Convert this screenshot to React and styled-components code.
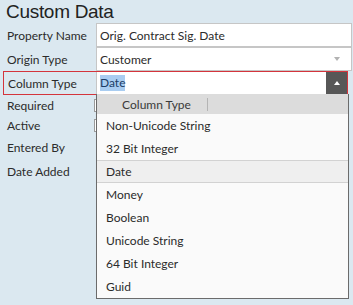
import React from "react";
import styled, { createGlobalStyle } from "styled-components";

const GlobalStyle = createGlobalStyle`
    html, body {
        margin: 0;
        padding: 0;
        background: #dbe8f0;
    }
    * { box-sizing: border-box; }
`;

// 전체 화면
const Page = styled.div`
    width: 353px;
    height: 305px;
    overflow: hidden;
    padding: 0 1px 0 3px;
    font-family: Lato, "Liberation Sans", sans-serif;
    font-size: 12px;
    color: #2b2b2b;
`;

const Title = styled.h1`
    margin: 0;
    height: 23px;
    padding: 1px 0 0 3px;
    font-family: "Liberation Sans", Arial, sans-serif;
    font-weight: normal;
    font-size: 19px;
    letter-spacing: -0.3px;
    line-height: 22px;
    color: #222;
`;

// 라벨 + 입력 한 줄
const Row = styled.div`
    position: relative;
    display: grid;
    grid-template-columns: 93px 1fr;
    align-items: center;
    height: ${(p) => p.$h || 24}px;
`;

const FocusRow = styled(Row)`
    width: 345px;
    border: 1px solid #d4343c;
    grid-template-columns: 92px 1fr;
`;

const Label = styled.span`
    padding-left: 4px;
    white-space: nowrap;
`;

const Field = styled.div`
    display: flex;
    align-items: center;
    height: 24px;
    padding: 0 3px;
    background: #fff;
    border: 1px solid #c6c6c6;
    white-space: nowrap;
    overflow: hidden;
`;

const FocusField = styled.div`
    display: flex;
    align-items: center;
    height: 22px;
    padding-left: 3px;
    background: #fff;
    border-left: 1px solid #c6c6c6;
`;

const Selected = styled.span`
    background: #a9cdf1;
    color: #1c3d66;
    line-height: 16px;
`;

const Caret = styled.span`
    margin-left: auto;
    margin-right: 8px;
    width: 0;
    height: 0;
    border-left: 3px solid transparent;
    border-right: 3px solid transparent;
    border-top: 4px solid #b2b2b2;
`;

const DropButton = styled.div`
    margin-left: auto;
    width: 21px;
    height: 22px;
    background: #575757;
    display: flex;
    align-items: center;
    justify-content: center;

    &::after {
        content: "";
        width: 0;
        height: 0;
        border-left: 3.5px solid transparent;
        border-right: 3.5px solid transparent;
        border-bottom: 4px solid #fff;
    }
`;

const Checkbox = styled.span`
    display: block;
    width: 13px;
    height: 13px;
    margin-left: -2px;
    background: #fff;
    border: 1px solid #9a9a9a;
`;

// 드롭다운 목록
const Popup = styled.div`
    position: absolute;
    top: 100%;
    left: 92px;
    width: 253px;
    background: #fafafa;
    border: 1px solid #6b6b6b;
    border-top: none;
    z-index: 2;
`;

const PopupHeader = styled.div`
    height: 20px;
    background: #dcdcdc;
    display: flex;
    align-items: center;
`;

const HeaderCell = styled.div`
    width: 111px;
    padding-left: 9px;
    text-align: center;
    border-right: 1px solid #b4b4b4;
    line-height: 13px;
    color: #3a3a3a;
`;

const Item = styled.div`
    height: 23px;
    display: flex;
    align-items: center;
    padding-left: 9px;
    color: #2b2b2b;
    ${(p) =>
        p.$active &&
        `
        background: #efefef;
        border-top: 1px solid #d2d2d2;
        border-bottom: 1px solid #d2d2d2;
    `}
`;

const types = [
    "Non-Unicode String",
    "32 Bit Integer",
    "Date",
    "Money",
    "Boolean",
    "Unicode String",
    "64 Bit Integer",
    "Guid",
];

function App() {
    return (
        <Page>
            <GlobalStyle />
            <Title>Custom Data</Title>
            <Row>
                <Label>Property Name</Label>
                <Field>Orig. Contract Sig. Date</Field>
            </Row>
            <Row>
                <Label>Origin Type</Label>
                <Field>
                    Customer
                    <Caret />
                </Field>
            </Row>
            <FocusRow>
                <Label>Column Type</Label>
                <FocusField>
                    <Selected>Date</Selected>
                    <DropButton />
                </FocusField>
                <Popup>
                    <PopupHeader>
                        <HeaderCell>Column Type</HeaderCell>
                    </PopupHeader>
                    {types.map((t) => (
                        <Item key={t} $active={t === "Date"}>
                            {t}
                        </Item>
                    ))}
                </Popup>
            </FocusRow>
            <Row $h={20}>
                <Label>Required</Label>
                <Checkbox />
            </Row>
            <Row $h={20}>
                <Label>Active</Label>
                <Checkbox />
            </Row>
            <Row $h={24}>
                <Label>Entered By</Label>
            </Row>
            <Row $h={24}>
                <Label>Date Added</Label>
            </Row>
        </Page>
    );
}

export default App;
